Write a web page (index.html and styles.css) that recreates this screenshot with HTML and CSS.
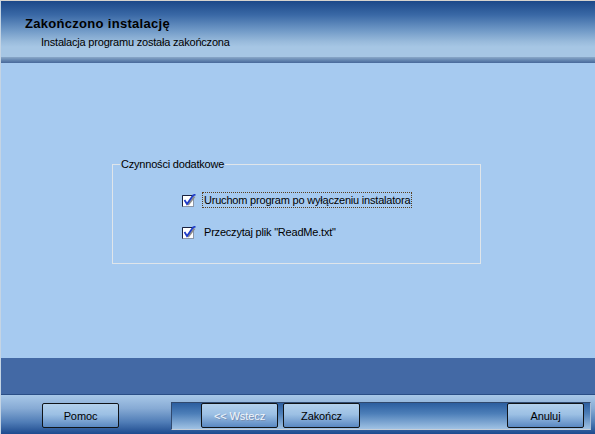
FILE: index.html
```html
<!DOCTYPE html>
<html lang="pl">
<head>
<meta charset="utf-8">
<title>Zakończono instalację</title>
<link rel="stylesheet" href="styles.css">
</head>
<body>
<div class="window">
  <header class="header">
    <div class="title">Zakończono instalację</div>
    <div class="subtitle">Instalacja programu została zakończona</div>
  </header>
  <div class="header-band"></div>
  <main class="content">
    <div class="group">
      <span class="legend">Czynności dodatkowe</span>
      <div class="row">
        <svg class="check" width="14" height="13" viewBox="0 0 14 13">
          <rect x="0.5" y="1.5" width="11" height="11" fill="#fff" stroke="#8a96a8"/>
          <path d="M0.5 12.5 V1.5 H11.5" fill="none" stroke="#1a2240"/>
          <path d="M6 11 L12.5 2.5" stroke="#8c8c8c" stroke-width="2" fill="none"/>
          <path d="M2.5 6 L5 10 L11 1.5 L13.5 0.5" stroke="#1f3cc8" stroke-width="1.8" fill="none"/>
        </svg>
        <span class="label focused">Uruchom program po wyłączeniu instalatora</span>
      </div>
      <div class="row">
        <svg class="check" width="14" height="13" viewBox="0 0 14 13">
          <rect x="0.5" y="1.5" width="11" height="11" fill="#fff" stroke="#8a96a8"/>
          <path d="M0.5 12.5 V1.5 H11.5" fill="none" stroke="#1a2240"/>
          <path d="M6 11 L12.5 2.5" stroke="#8c8c8c" stroke-width="2" fill="none"/>
          <path d="M2.5 6 L5 10 L11 1.5 L13.5 0.5" stroke="#1f3cc8" stroke-width="1.8" fill="none"/>
        </svg>
        <span class="label">Przeczytaj plik "ReadMe.txt"</span>
      </div>
    </div>
  </main>
  <div class="status-band"></div>
  <footer class="buttonbar">
    <button class="btn">Pomoc</button>
    <div class="panel">
      <button class="btn disabled">&lt;&lt; Wstecz</button>
      <button class="btn">Zakończ</button>
      <span class="spacer"></span>
      <button class="btn">Anuluj</button>
    </div>
  </footer>
</div>
</body>
</html>
```

FILE: styles.css
```css
* { box-sizing: border-box; }
html, body { margin: 0; padding: 0; }
body {
  width: 595px;
  height: 434px;
  overflow: hidden;
  font-family: "Liberation Sans", Arial, sans-serif;
  font-size: 11px;
  letter-spacing: -0.2px;
  color: #000;
  background: #d4d0c8;
}
.window {
  width: 595px;
  height: 434px;
  display: flex;
  flex-direction: column;
  border-top: 1px solid #d6d3ce;
  border-left: 1px solid #c4d4e4;
}
.header {
  height: 56px;
  flex: none;
  padding: 15px 0 0 24px;
  background: linear-gradient(to bottom,
    #1c4889 0%,
    #3a69a6 25%,
    #6b95c4 50%,
    #98badb 72%,
    #a6c6e4 82%,
    #a6c6e4 100%);
}
.title {
  font-weight: bold;
  font-size: 13px;
  line-height: 15px;
  letter-spacing: 0.3px;
}
.subtitle {
  margin: 4px 0 0 16px;
  line-height: 14px;
}
.header-band {
  height: 6px;
  flex: none;
  background: linear-gradient(to bottom, #8aa8c8, #6688b2 50%, #47689a);
}
.content {
  height: 295px;
  flex: none;
  background: #a6caf0;
  padding: 101px 0 0 111px;
}
.group {
  position: relative;
  width: 369px;
  height: 100px;
  border: 1px solid #dfe5ea;
  padding: 27px 0 0 69px;
  display: flex;
  flex-direction: column;
  gap: 16px;
}
.legend {
  position: absolute;
  top: -8px;
  left: 7px;
  padding: 0 1px;
  line-height: 14px;
  background: #a6caf0;
}
.row {
  display: flex;
  align-items: center;
  height: 16px;
}
.check {
  flex: none;
  margin-right: 6px;
}
.label {
  line-height: 14px;
  padding: 0 1px;
  border: 1px dotted transparent;
}
.label.focused {
  border-color: #5a4020;
}
.status-band {
  height: 37px;
  flex: none;
  background: #4369a5;
  border-bottom: 1px solid #2a4e86;
}
.buttonbar {
  flex: 1;
  display: flex;
  align-items: flex-start;
  padding: 7px 0 0 41px;
  background: linear-gradient(to bottom, #a8c8e8 0%, #86aad4 35%, #4f7cb6 70%, #1d4a8e 100%);
}
.btn {
  width: 77px;
  height: 25px;
  margin-top: 1px;
  border: 1px solid #101418;
  border-radius: 2px;
  background: linear-gradient(to bottom, #b2d0ec 0%, #9cc0e4 45%, #5a88c2 100%);
  font-family: "Liberation Sans", Arial, sans-serif;
  font-size: 11px;
  letter-spacing: -0.1px;
  color: #000;
  padding: 0;
}
.btn.disabled {
  color: #f2f6fa;
  text-shadow: 1px 1px 0 #7890b4;
}
.panel {
  margin-left: 52px;
  width: 420px;
  height: 28px;
  display: flex;
  align-items: flex-start;
  gap: 5px;
  padding: 0 6px 0 29px;
  border-top: 1px solid #30496e;
  border-left: 1px solid #30496e;
  border-bottom: 1px solid #c6ced8;
  border-right: 1px solid #a6bcd6;
  background: linear-gradient(to bottom, #2c5e9f 0%, #4c7eb8 40%, #a0c2e4 100%);
}
.panel .btn { margin-top: 0; }
.spacer { flex: 1; }
```
